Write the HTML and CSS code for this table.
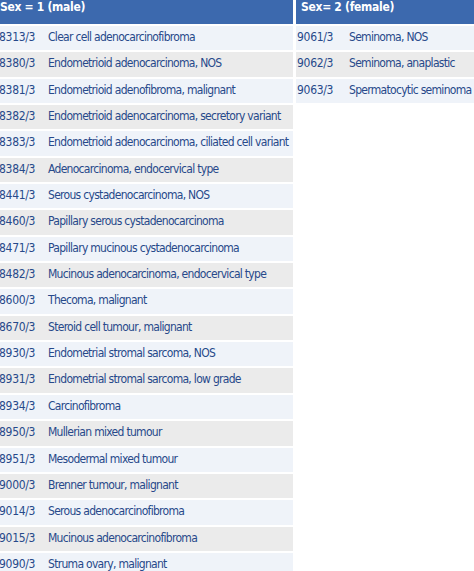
FILE: index.html
```html
<!DOCTYPE html>
<html>
<head>
<meta charset="utf-8">
<link rel="stylesheet" href="styles.css">
</head>
<body>
<div class="tables">
  <div class="col col-left">
    <div class="head">Sex = 1 (male)</div>
    <div class="row light"><span class="code">8313/3</span><span class="desc">Clear cell adenocarcinofibroma</span></div>
    <div class="row gray"><span class="code">8380/3</span><span class="desc">Endometrioid adenocarcinoma, NOS</span></div>
    <div class="row light"><span class="code">8381/3</span><span class="desc">Endometrioid adenofibroma, malignant</span></div>
    <div class="row gray"><span class="code">8382/3</span><span class="desc">Endometrioid adenocarcinoma, secretory variant</span></div>
    <div class="row light"><span class="code">8383/3</span><span class="desc">Endometrioid adenocarcinoma, ciliated cell variant</span></div>
    <div class="row gray"><span class="code">8384/3</span><span class="desc">Adenocarcinoma, endocervical type</span></div>
    <div class="row light"><span class="code">8441/3</span><span class="desc">Serous cystadenocarcinoma, NOS</span></div>
    <div class="row gray"><span class="code">8460/3</span><span class="desc">Papillary serous cystadenocarcinoma</span></div>
    <div class="row light"><span class="code">8471/3</span><span class="desc">Papillary mucinous cystadenocarcinoma</span></div>
    <div class="row gray"><span class="code">8482/3</span><span class="desc">Mucinous adenocarcinoma, endocervical type</span></div>
    <div class="row light"><span class="code">8600/3</span><span class="desc">Thecoma, malignant</span></div>
    <div class="row gray"><span class="code">8670/3</span><span class="desc">Steroid cell tumour, malignant</span></div>
    <div class="row light"><span class="code">8930/3</span><span class="desc">Endometrial stromal sarcoma, NOS</span></div>
    <div class="row gray"><span class="code">8931/3</span><span class="desc">Endometrial stromal sarcoma, low grade</span></div>
    <div class="row light"><span class="code">8934/3</span><span class="desc">Carcinofibroma</span></div>
    <div class="row gray"><span class="code">8950/3</span><span class="desc">Mullerian mixed tumour</span></div>
    <div class="row light"><span class="code">8951/3</span><span class="desc">Mesodermal mixed tumour</span></div>
    <div class="row gray"><span class="code">9000/3</span><span class="desc">Brenner tumour, malignant</span></div>
    <div class="row light"><span class="code">9014/3</span><span class="desc">Serous adenocarcinofibroma</span></div>
    <div class="row gray"><span class="code">9015/3</span><span class="desc">Mucinous adenocarcinofibroma</span></div>
    <div class="row light"><span class="code">9090/3</span><span class="desc">Struma ovary, malignant</span></div>
  </div>
  <div class="col col-right">
    <div class="head">Sex= 2 (female)</div>
    <div class="row light"><span class="code">9061/3</span><span class="desc">Seminoma, NOS</span></div>
    <div class="row gray"><span class="code">9062/3</span><span class="desc">Seminoma, anaplastic</span></div>
    <div class="row light"><span class="code">9063/3</span><span class="desc">Spermatocytic seminoma</span></div>
  </div>
</div>
</body>
</html>
```
FILE: styles.css
```css
html, body {
  margin: 0;
  padding: 0;
  background: #ffffff;
  overflow: hidden;
}
body {
  width: 474px;
  height: 571px;
  font-family: "DejaVu Sans Condensed", "DejaVu Sans", sans-serif;
  font-size: 12px;
  color: #27498a;
}
.tables {
  display: grid;
  grid-template-columns: 294px 180px;
  column-gap: 3px;
  margin-left: -1px;
  align-items: start;
}
.col {
  display: flex;
  flex-direction: column;
  gap: 2px;
  overflow: hidden;
}
.head {
  height: 24px;
  background: #3c69ae;
  color: #ffffff;
  font-weight: bold;
  font-size: 12px;
  letter-spacing: -0.3px;
  line-height: 15px;
  padding: 0 0 0 1px;
  white-space: nowrap;
  box-sizing: border-box;
}
.col-right .head {
  padding-left: 5px;
}
.row {
  height: 24.35px;
  display: flex;
  align-items: flex-start;
  padding-top: 4px;
  box-sizing: border-box;
  white-space: nowrap;
  line-height: 15px;
}
.light { background: #eff3f9; }
.gray { background: #ebebeb; }
.code {
  width: 49px;
  flex: none;
  letter-spacing: -0.3px;
}
.col-right .code {
  padding-left: 1px;
  width: 52px;
}
.desc {
  flex: none;
  letter-spacing: -0.7px;
}
```
